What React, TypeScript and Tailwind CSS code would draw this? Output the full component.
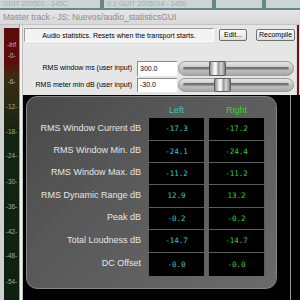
const ui = { fontFamily: '"Liberation Sans", Arial, sans-serif' }
const mono = { fontFamily: '"DejaVu Sans Mono", "Liberation Mono", monospace' }

const marks = [
  { label: '-inf', cls: 'mt-[12px] text-[#d8b8b0]' },
  { label: '-0-', cls: 'mt-[1px] text-[#d8b8b0]' },
  { label: '-6-', cls: 'mt-[16px] text-[#b8b0a0]' },
  { label: '-12-', cls: 'mt-[15px] text-[#a8a898]' },
  { label: '-18-', cls: 'mt-[15px] text-[#a0a898]' },
  { label: '-24-', cls: 'mt-[14px] text-[#a0a898]' },
  { label: '-30-', cls: 'mt-[16px] text-[#a0a898]' },
  { label: '-36-', cls: 'mt-[15px] text-[#a0a898]' },
  { label: '-42-', cls: 'mt-[15px] text-[#a0a898]' },
  { label: '-48-', cls: 'mt-[14px] text-[#a0a898]' },
  { label: '-54-', cls: 'mt-[16px] text-[#a0a898]' }
]

const rows = [
  { label: 'RMS Window Current dB', left: '-17.3', right: '-17.2', h: 'h-[22px]' },
  { label: 'RMS Window Min. dB', left: '-24.1', right: '-24.4', h: 'h-[22px]' },
  { label: 'RMS Window Max. dB', left: '-11.2', right: '-11.2', h: 'h-[22px]' },
  { label: 'RMS Dynamic Range dB', left: '12.9', right: '13.2', h: 'h-[23px]' },
  { label: 'Peak dB', left: '-0.2', right: '-0.2', h: 'h-[22px]' },
  { label: 'Total Loudness dB', left: '-14.7', right: '-14.7', h: 'h-[23px]' },
  { label: 'DC Offset', left: '-0.0', right: '-0.0', h: 'h-[24px]' }
]

function Slider({ thumb }: { thumb: string }) {
  return (
    <div className="relative ml-[1px] w-[116px] h-full rounded-full border border-[#9a9a9a] bg-[linear-gradient(to_bottom,#e6e6e6,#c8c8c8_45%,#a8a8a8)] flex items-center px-[4px]">
      <div className="h-[4px] w-full rounded-full bg-[linear-gradient(to_bottom,#626262,#8e8e8e_60%,#d0d0d0)]" />
      <div
        className={`absolute top-[-1px] ${thumb} w-[17px] h-[calc(100%+2px)] rounded-[2px] border border-[#5e5e5e] bg-[linear-gradient(to_right,#8a8a8a,#e8e8e8_25%,#ffffff_40%,#9a9a9a_55%,#d4d4d4_75%,#7c7c7c)]`}
      />
    </div>
  )
}

export default function App() {
  return (
    <div className="w-[300px] h-[300px] overflow-hidden flex flex-col bg-[#d4d4d4]" style={ui}>
      {/* window behind */}
      <div className="h-[10px] bg-[#628a8a] flex gap-[4px] text-[7px] leading-[8px] text-[#a0acac]">
        <div className="w-[100px] h-[8px] bg-[#cdd4d4] pl-[3px] truncate">GUIT 200501 - 145C</div>
        <div className="w-[108px] h-[8px] bg-[#cdd4d4] pl-[3px] truncate">0.1 GUIT 2005014 - 1456</div>
        <div className="w-[46px] h-[8px] bg-[#cdd4d4]" />
        <div className="flex-1 h-[8px] bg-[#cdd4d4]" />
      </div>

      {/* title bar */}
      <div className="h-[15px] bg-[linear-gradient(to_bottom,#e6e6e6,#d8d8d8)] border-b border-[#c4c4c4] pl-[3px] text-[8.5px] leading-[14px] text-[#8c8c8c] whitespace-nowrap">
        Master track - JS: Nuevos/audio_statisticsGUI
      </div>

      <div className="flex flex-1 min-h-0">
        {/* left border */}
        <div className="w-[4px] bg-[#d0d0d0]" />

        {/* meter */}
        <div className="w-[15px] mt-[3px] flex flex-col items-center bg-[linear-gradient(to_bottom,#5c0c0c_0px,#5c0c0c_34px,#3e2a12_48px,#2a2a12_75px,#142412_105px,#102010_100%)] text-[6.5px] leading-[10px]">
          {marks.map((m) => (
            <div key={m.label} className={`h-[10px] ${m.cls}`}>{m.label}</div>
          ))}
        </div>

        <div className="w-[1px] bg-[#9a9a9a]" />
        <div className="w-[2px] bg-[#f0f0f0]" />
        <div className="w-[1px] bg-[#c0c0c0]" />

        {/* main */}
        <div className="w-[273px] flex flex-col">
          <div className="h-[70px] bg-[#e6e6e6] flex flex-col text-[7px] text-black">
            <div className="flex items-start pt-[3px]">
              <div className="ml-[1px] w-[190px] h-[14px] bg-[#f3f3f3] border-l border-t border-[#9c9c9c] border-b border-r border-b-[#ffffff] border-r-[#ffffff] text-center leading-[13px] whitespace-nowrap">
                Audio statistics. Resets when the transport starts.
              </div>
              <div className="ml-[5px] mt-[1px] w-[28px] h-[12px] rounded-[2px] border border-[#707070] bg-[linear-gradient(to_bottom,#fdfdfd,#dedede)] text-center leading-[10px]">
                Edit...
              </div>
              <div className="ml-[9px] mt-[1px] w-[39px] h-[12px] rounded-[2px] border border-[#707070] bg-[linear-gradient(to_bottom,#fdfdfd,#dedede)] text-center leading-[10px] whitespace-nowrap">
                Recompile
              </div>
            </div>

            <div className="mt-[19px] h-[15px] flex items-center">
              <div className="w-[109px] text-right whitespace-nowrap">RMS window ms (user input)</div>
              <div className="ml-[5px] w-[40px] h-full bg-white border-t border-l border-[#8a8a8a] pl-[2px] leading-[13px]">300.0</div>
              <Slider thumb="left-[30px]" />
            </div>
            <div className="mt-[2px] h-[14px] flex items-center">
              <div className="w-[109px] text-right whitespace-nowrap">RMS meter min dB (user input)</div>
              <div className="ml-[5px] w-[40px] h-full bg-white border-t border-l border-[#8a8a8a] pl-[2px] leading-[12px]">-30.0</div>
              <Slider thumb="left-[35px]" />
            </div>
          </div>

          {/* stats area */}
          <div className="flex-1 bg-black flex">
            <div className="ml-[3px] mt-[1px] w-[251px] h-[193px] rounded-[11px] border border-[#858585] bg-[linear-gradient(135deg,#4a4a4a,#5c5c5c_50%,#6a6a6a)] flex flex-col">
              <div className="h-[21px] flex items-end pb-[3px] text-[9px] leading-[10px]">
                <div className="w-[121px]" />
                <div className="w-[57px] text-center text-[#36c4c4]">Left</div>
                <div className="ml-[3px] w-[57px] text-center text-[#36d036]">Right</div>
              </div>
              <div className="flex">
                <div className="w-[121px] flex flex-col text-[9px] text-[#e6e6e6]">
                  {rows.map((r) => (
                    <div key={r.label} className={`${r.h} flex items-center justify-end pr-[7px] whitespace-nowrap`}>
                      {r.label}
                    </div>
                  ))}
                </div>
                <div className="w-[57px] bg-black border-x border-[#5c5c5c] flex flex-col text-[7.5px] text-[#3cc8cc]" style={mono}>
                  {rows.map((r, i) => (
                    <div key={r.label} className={`${r.h} flex items-center justify-center ${i > 0 ? 'border-t border-[#5a5a5a]' : ''}`}>
                      {r.left}
                    </div>
                  ))}
                </div>
                <div className="ml-[3px] w-[57px] bg-black border-x border-[#5c5c5c] flex flex-col text-[7.5px] text-[#2ed22e]" style={mono}>
                  {rows.map((r, i) => (
                    <div key={r.label} className={`${r.h} flex items-center justify-center ${i > 0 ? 'border-t border-[#5a5a5a]' : ''}`}>
                      {r.right}
                    </div>
                  ))}
                </div>
              </div>
            </div>
            <div className="ml-auto mr-[5px] w-[1px] bg-[#9a9a9a]" />
          </div>
        </div>

        {/* right edge */}
        <div className="flex-1 flex flex-col">
          <div className="h-[70px] flex">
            <div className="w-[1px] bg-[#d8d8d8]" />
            <div className="w-[2px] bg-[#6e1414]" />
            <div className="flex-1 bg-[#d8d8d8]" />
          </div>
          <div className="flex-1 bg-black" />
        </div>
      </div>
    </div>
  )
}
